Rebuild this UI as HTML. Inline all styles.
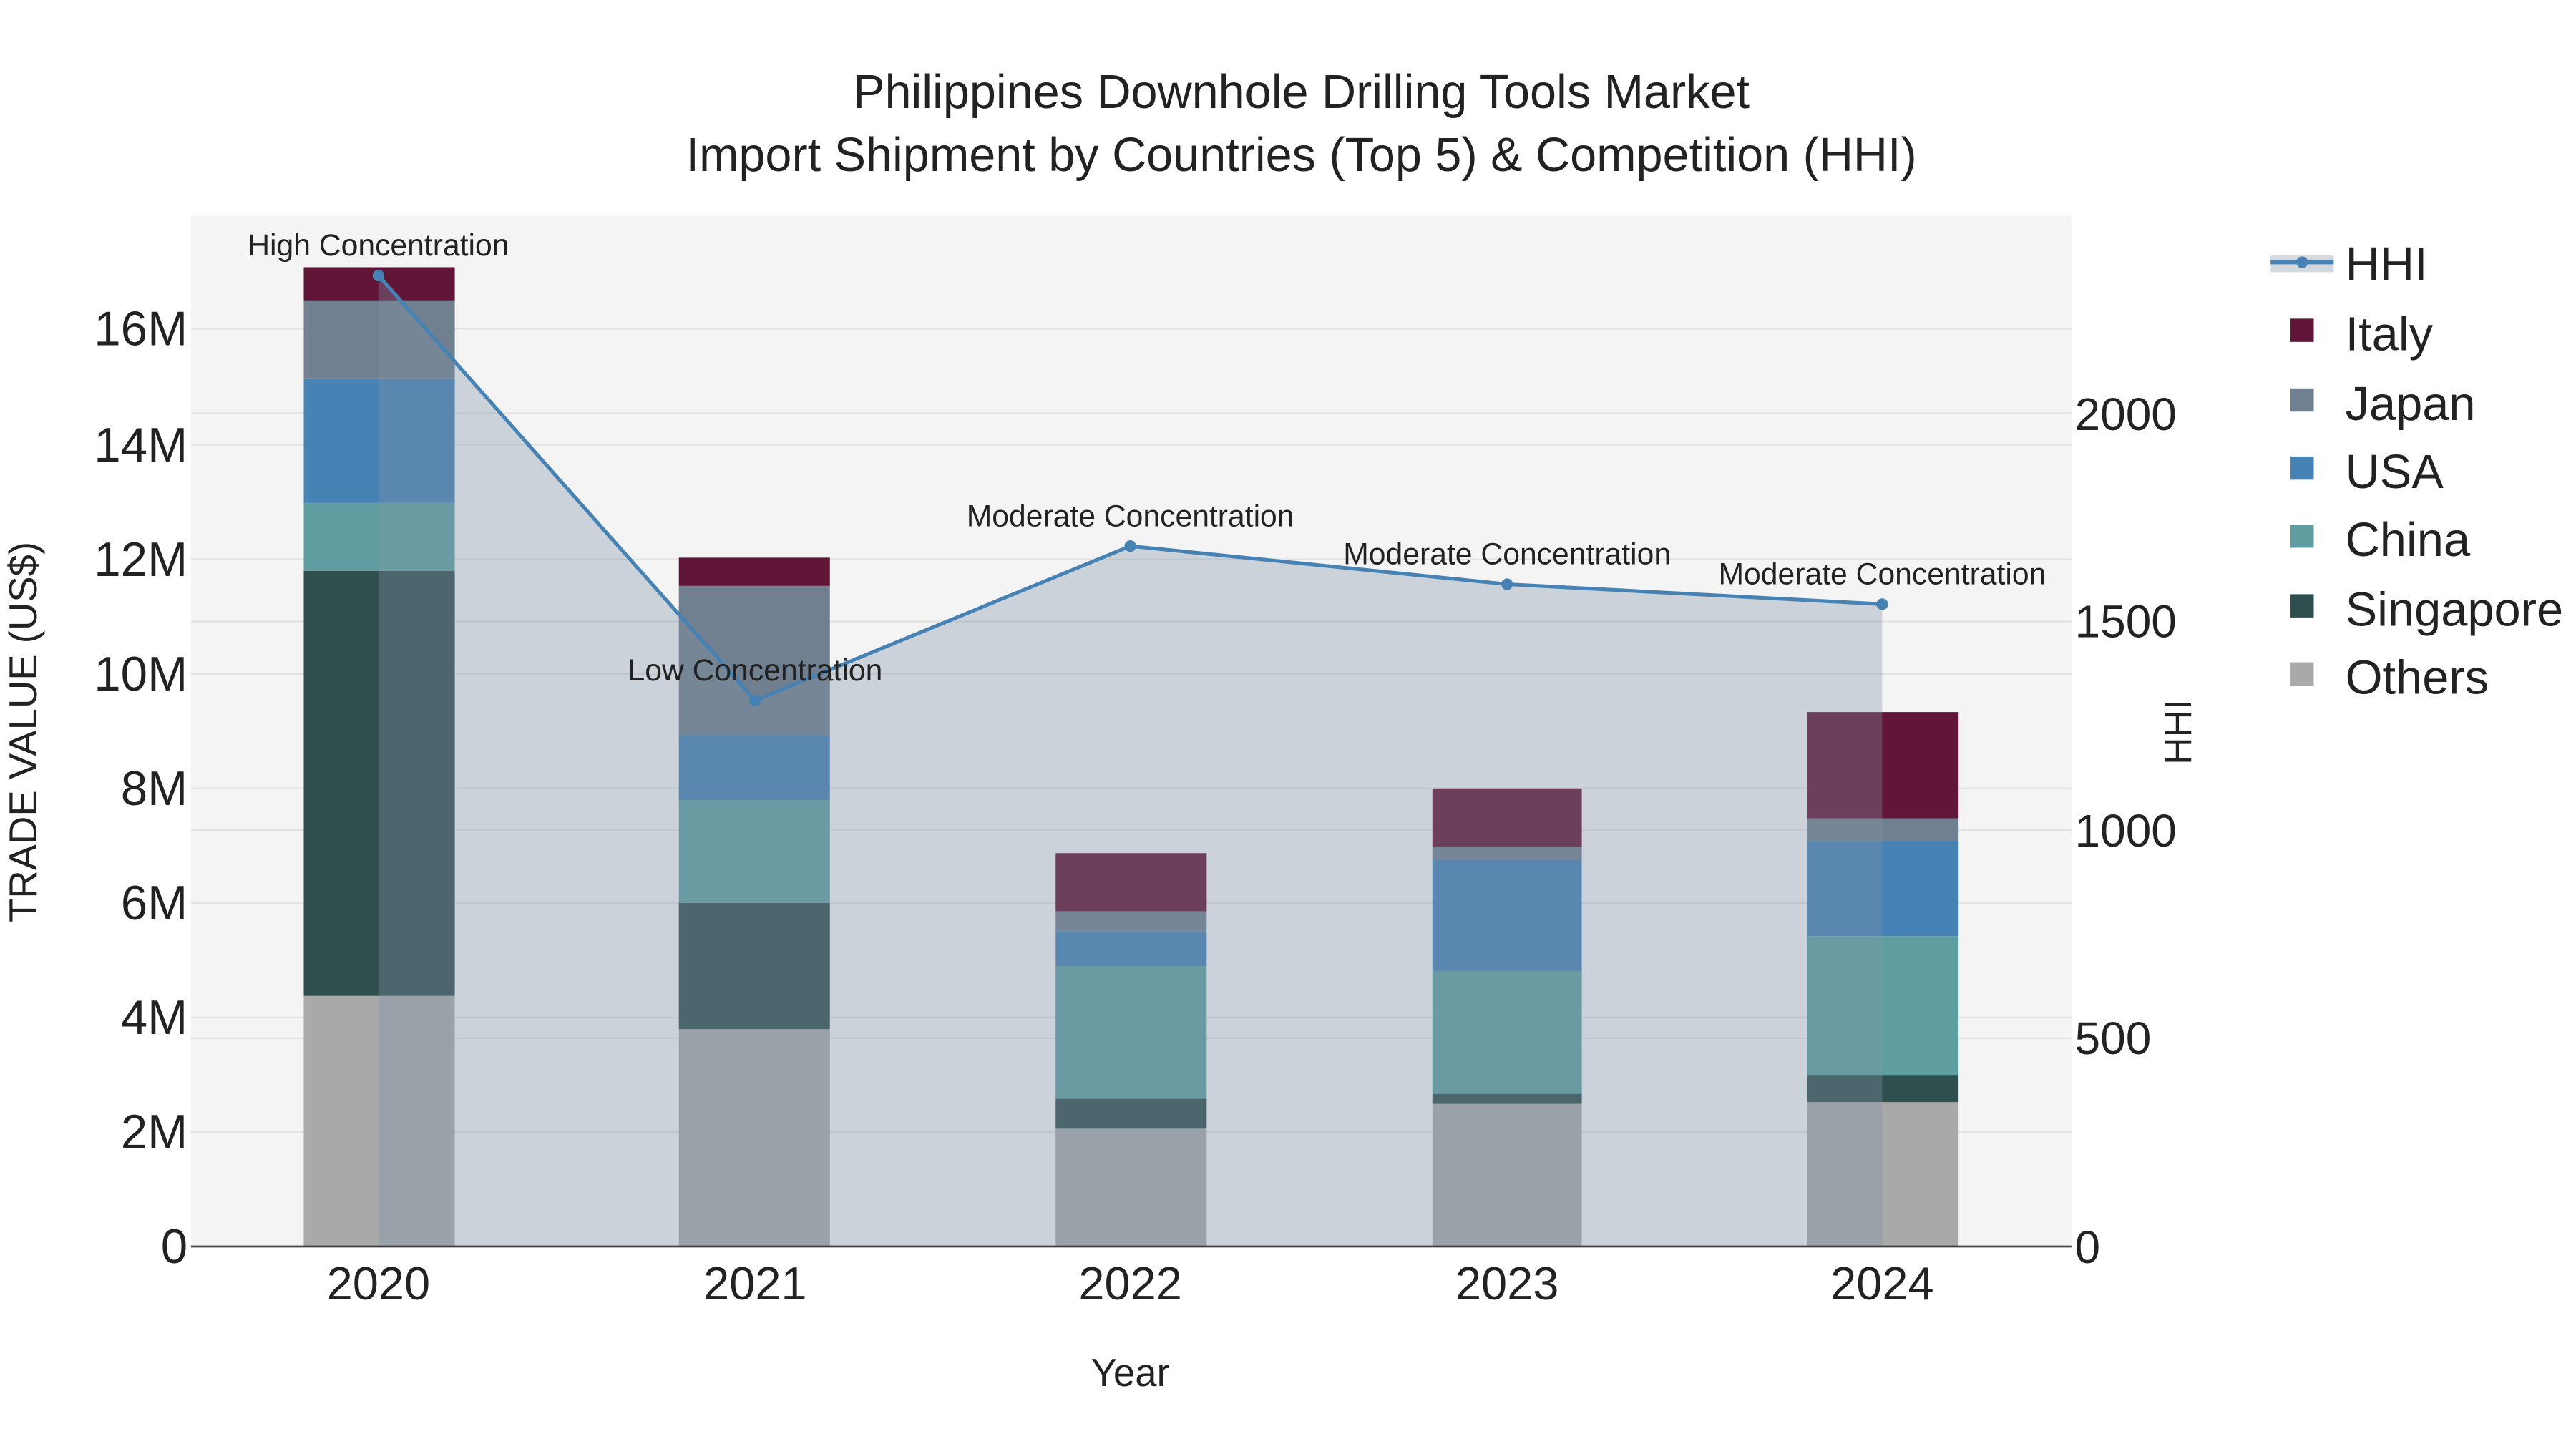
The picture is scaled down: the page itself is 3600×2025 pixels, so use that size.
<!DOCTYPE html>
<html><head><meta charset="utf-8"><style>
html,body{margin:0;padding:0;background:#fff;}
svg{display:block;}
text{font-family:"Liberation Sans",Arial,sans-serif;fill:#222;}
</style></head><body>
<svg width="3600" height="2025" viewBox="0 0 1552 873" preserveAspectRatio="none" xmlns="http://www.w3.org/2000/svg">
<rect x="0" y="0" width="1552" height="873" fill="#fff"/>
<rect x="115" y="130" width="1133" height="621" fill="#f4f4f4"/>
<g stroke="#e2e2e2" stroke-width="1">
<line x1="115" x2="1248" y1="682" y2="682"/><line x1="115" x2="1248" y1="613" y2="613"/>
<line x1="115" x2="1248" y1="544" y2="544"/><line x1="115" x2="1248" y1="475" y2="475"/>
<line x1="115" x2="1248" y1="406" y2="406"/><line x1="115" x2="1248" y1="337" y2="337"/>
<line x1="115" x2="1248" y1="268" y2="268"/><line x1="115" x2="1248" y1="198" y2="198"/>
<line x1="115" x2="1248" y1="625.5" y2="625.5"/><line x1="115" x2="1248" y1="500" y2="500"/>
<line x1="115" x2="1248" y1="374.5" y2="374.5"/><line x1="115" x2="1248" y1="249" y2="249"/>
</g>
<g>
<rect x="183" y="600" width="91" height="151" fill="#a9a9a9"/>
<rect x="183" y="344" width="91" height="256" fill="#2f4f4f"/>
<rect x="183" y="303" width="91" height="41" fill="#5f9ea0"/>
<rect x="183" y="228" width="91" height="75" fill="#4682b4"/>
<rect x="183" y="181" width="91" height="47" fill="#708090"/>
<rect x="183" y="161" width="91" height="20" fill="#611537"/>

<rect x="409" y="620" width="91" height="131" fill="#a9a9a9"/>
<rect x="409" y="544" width="91" height="76" fill="#2f4f4f"/>
<rect x="409" y="482" width="91" height="62" fill="#5f9ea0"/>
<rect x="409" y="443" width="91" height="39" fill="#4682b4"/>
<rect x="409" y="353" width="91" height="90" fill="#708090"/>
<rect x="409" y="336" width="91" height="17" fill="#611537"/>

<rect x="636" y="680" width="91" height="71" fill="#a9a9a9"/>
<rect x="636" y="662" width="91" height="18" fill="#2f4f4f"/>
<rect x="636" y="582" width="91" height="80" fill="#5f9ea0"/>
<rect x="636" y="561" width="91" height="21" fill="#4682b4"/>
<rect x="636" y="549" width="91" height="12" fill="#708090"/>
<rect x="636" y="514" width="91" height="35" fill="#611537"/>

<rect x="863" y="665" width="90" height="86" fill="#a9a9a9"/>
<rect x="863" y="659" width="90" height="6" fill="#2f4f4f"/>
<rect x="863" y="585" width="90" height="74" fill="#5f9ea0"/>
<rect x="863" y="518" width="90" height="67" fill="#4682b4"/>
<rect x="863" y="510" width="90" height="8" fill="#708090"/>
<rect x="863" y="475" width="90" height="35" fill="#611537"/>

<rect x="1089" y="664" width="91" height="87" fill="#a9a9a9"/>
<rect x="1089" y="648" width="91" height="16" fill="#2f4f4f"/>
<rect x="1089" y="564" width="91" height="84" fill="#5f9ea0"/>
<rect x="1089" y="507" width="91" height="57" fill="#4682b4"/>
<rect x="1089" y="493" width="91" height="14" fill="#708090"/>
<rect x="1089" y="429" width="91" height="64" fill="#611537"/>
</g>
<polygon points="228,751 228,166 455,422 681,329 908,352 1134,364 1134,751" fill="rgb(130,145,165)" fill-opacity="0.35"/>
<polyline points="228,166 455,422 681,329 908,352 1134,364" fill="none" stroke="#4682b4" stroke-width="2.2"/>
<g fill="#4682b4"><circle cx="228" cy="166" r="3.5"/><circle cx="455" cy="422" r="3.5"/><circle cx="681" cy="329" r="3.5"/><circle cx="908" cy="352" r="3.5"/><circle cx="1134" cy="364" r="3.5"/></g>
<line x1="115" x2="1248" y1="751" y2="751" stroke="#444" stroke-width="1.2"/>
<g font-size="18.4" text-anchor="middle">
<text x="228" y="154">High Concentration</text>
<text x="455" y="410">Low Concentration</text>
<text x="681" y="317">Moderate Concentration</text>
<text x="908" y="340">Moderate Concentration</text>
<text x="1134" y="352">Moderate Concentration</text>
</g>
<g font-size="28.7" text-anchor="middle">
<text x="784" y="65">Philippines Downhole Drilling Tools Market</text>
<text x="784" y="103">Import Shipment by Countries (Top 5) &amp; Competition (HHI)</text>
</g>
<g font-size="29" text-anchor="end">
<text x="113" y="761">0</text><text x="113" y="692">2M</text><text x="113" y="623">4M</text>
<text x="113" y="554">6M</text><text x="113" y="485">8M</text><text x="113" y="416">10M</text>
<text x="113" y="347">12M</text><text x="113" y="278">14M</text><text x="113" y="208">16M</text>
</g>
<g font-size="27.6" text-anchor="start">
<text x="1250" y="761">0</text><text x="1250" y="635">500</text><text x="1250" y="510">1000</text>
<text x="1250" y="384">1500</text><text x="1250" y="259">2000</text>
</g>
<g font-size="28" text-anchor="middle">
<text x="228" y="783">2020</text><text x="455" y="783">2021</text><text x="681" y="783">2022</text>
<text x="908" y="783">2023</text><text x="1134" y="783">2024</text>
</g>
<text x="681" y="835" font-size="23.5" text-anchor="middle">Year</text>
<text transform="translate(22,441) rotate(-90)" font-size="23.5" text-anchor="middle">TRADE VALUE (US$)</text>
<text transform="translate(1320,441) rotate(-90)" font-size="23" text-anchor="middle">HHI</text>
<rect x="1368" y="154" width="38" height="10" fill="rgb(130,145,165)" fill-opacity="0.35"/>
<line x1="1368" x2="1406" y1="158" y2="158" stroke="#4682b4" stroke-width="2.5"/>
<circle cx="1387" cy="158" r="3.5" fill="#4682b4"/>
<rect x="1380" y="192" width="14" height="14" fill="#611537"/>
<rect x="1380" y="234" width="14" height="14" fill="#708090"/>
<rect x="1380" y="275" width="14" height="14" fill="#4682b4"/>
<rect x="1380" y="316" width="14" height="14" fill="#5f9ea0"/>
<rect x="1380" y="358" width="14" height="14" fill="#2f4f4f"/>
<rect x="1380" y="399" width="14" height="14" fill="#a9a9a9"/>
<g font-size="28.8">
<text x="1413" y="169">HHI</text><text x="1413" y="211">Italy</text><text x="1413" y="253">Japan</text>
<text x="1413" y="294">USA</text><text x="1413" y="335">China</text><text x="1413" y="377">Singapore</text>
<text x="1413" y="418">Others</text>
</g>
</svg>
</body></html>
